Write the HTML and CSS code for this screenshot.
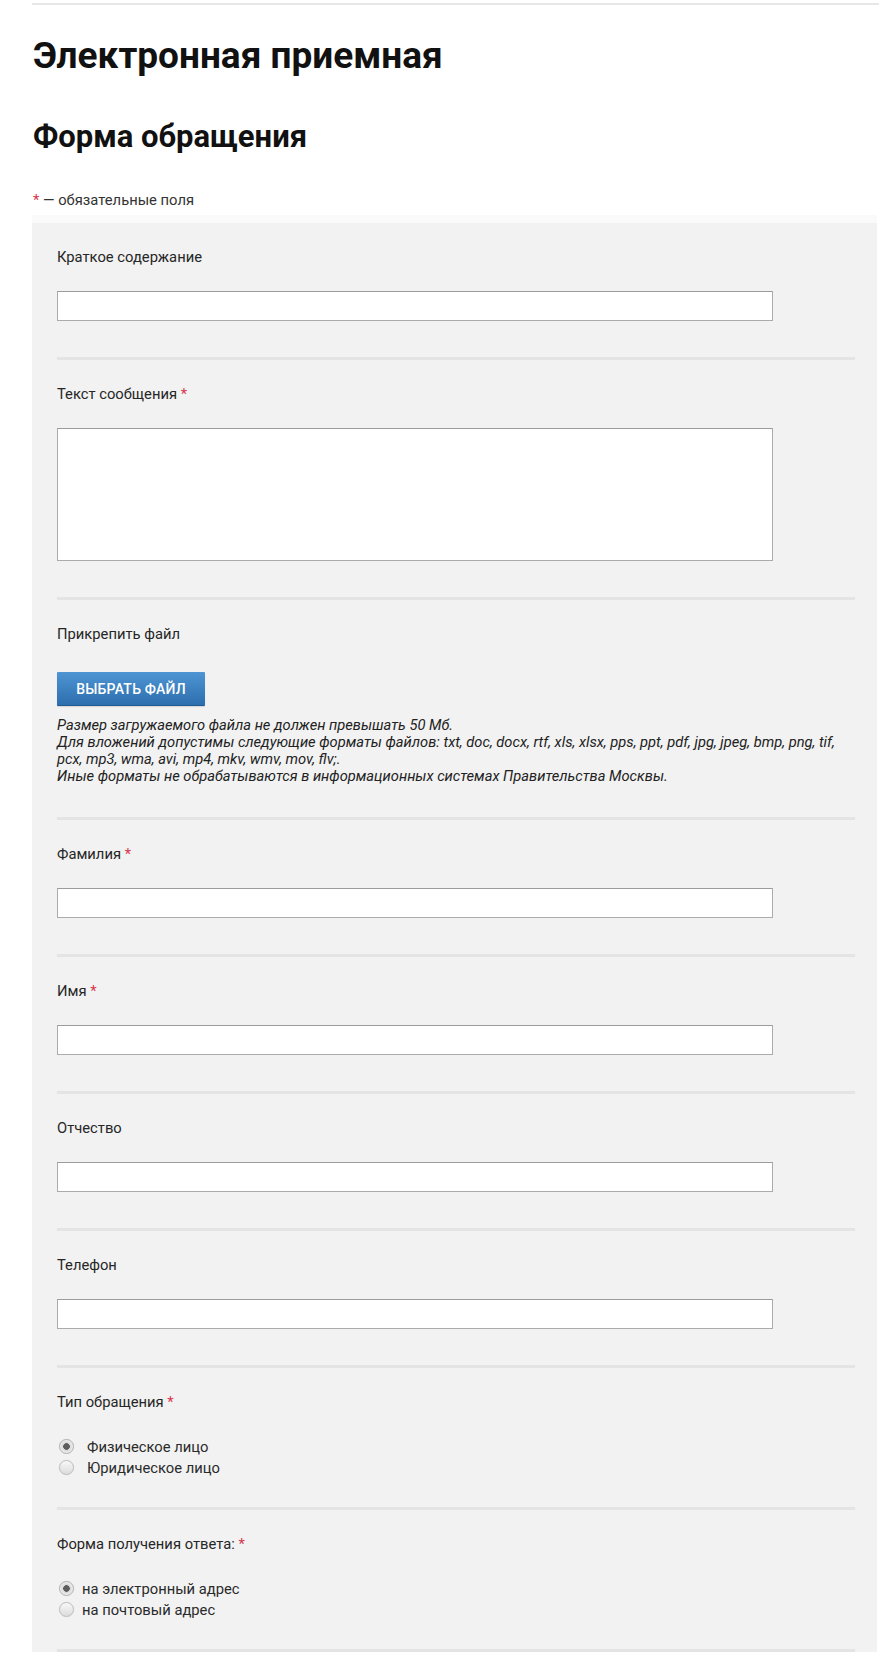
FILE: index.html
```html
<!DOCTYPE html>
<html lang="ru">
<head>
<meta charset="utf-8">
<title>Электронная приемная</title>
<link rel="stylesheet" href="styles.css">
</head>
<body>
<div class="page">
  <div class="topline"></div>
  <h1 class="title">Электронная приемная</h1>
  <h2 class="subtitle">Форма обращения</h2>
  <p class="req-note"><span class="star">*</span> — обязательные поля</p>

  <form class="panel">
    <div class="section">
      <label class="field-label">Краткое содержание</label>
      <input class="text-input" type="text">
    </div>

    <div class="section">
      <label class="field-label">Текст сообщения <span class="star">*</span></label>
      <textarea class="text-area"></textarea>
    </div>

    <div class="section section-file">
      <label class="field-label">Прикрепить файл</label>
      <button type="button" class="file-btn">Выбрать файл</button>
      <p class="file-note">Размер загружаемого файла не должен превышать 50 Мб.<br>Для вложений допустимы следующие форматы файлов: txt, doc, docx, rtf, xls, xlsx, pps, ppt, pdf, jpg, jpeg, bmp, png, tif, pcx, mp3, wma, avi, mp4, mkv, wmv, mov, flv;.<br>Иные форматы не обрабатываются в информационных системах Правительства Москвы.</p>
    </div>

    <div class="section">
      <label class="field-label">Фамилия <span class="star">*</span></label>
      <input class="text-input" type="text">
    </div>

    <div class="section">
      <label class="field-label">Имя <span class="star">*</span></label>
      <input class="text-input" type="text">
    </div>

    <div class="section">
      <label class="field-label">Отчество</label>
      <input class="text-input" type="text">
    </div>

    <div class="section">
      <label class="field-label">Телефон</label>
      <input class="text-input" type="text">
    </div>

    <div class="section section-radio">
      <div class="field-label">Тип обращения <span class="star">*</span></div>
      <div class="radio-group">
        <label class="radio-row wide"><input type="radio" name="t" class="radio" checked><span>Физическое лицо</span></label>
        <label class="radio-row wide"><input type="radio" name="t" class="radio"><span>Юридическое лицо</span></label>
      </div>
    </div>

    <div class="section section-radio">
      <div class="field-label">Форма получения ответа: <span class="star">*</span></div>
      <div class="radio-group">
        <label class="radio-row"><input type="radio" name="a" class="radio" checked><span>на электронный адрес</span></label>
        <label class="radio-row"><input type="radio" name="a" class="radio"><span>на почтовый адрес</span></label>
      </div>
    </div>
  </form>
</div>
</body>
</html>
```

FILE: styles.css
```css
* { box-sizing: border-box; }

html, body {
  margin: 0;
  padding: 0;
  background: #ffffff;
}

body {
  font-family: Roboto, "Noto Sans", "Liberation Sans", sans-serif;
  color: #222222;
  font-size: 14.75px;
  line-height: 20px;
}

.page {
  margin-left: 32px;
  width: 847px;
  padding-top: 3px;
}

.topline {
  height: 2px;
  background: #e7e7e7;
}

.title {
  margin: 29px 0 0 1px;
  font-size: 37px;
  line-height: 44px;
  font-weight: 700;
  color: #111111;
}

.subtitle {
  margin: 41px 0 0 1px;
  font-size: 31px;
  line-height: 36px;
  font-weight: 700;
  color: #111111;
}

.req-note {
  margin: 35px 0 0 1px;
  font-size: 14.75px;
  line-height: 20px;
  color: #333333;
}

.star {
  color: #d8374c;
}

.panel {
  margin-top: 13px;
  width: 845px;
  background: #f2f2f2;
  padding: 0 22px 0 25px;
  box-shadow: 0 -8px 0 #fafafa;
}

.section {
  padding: 24px 0 36px;
  border-bottom: 3px solid #e4e4e4;
}

.field-label {
  display: block;
  font-size: 14.75px;
  line-height: 20px;
  color: #262626;
  margin-bottom: 24px;
}

.text-input {
  display: block;
  width: 716px;
  height: 30px;
  margin: 0;
  background: #ffffff;
  border: 1px solid #ababab;
  border-top-color: #9c9c9c;
  border-radius: 0;
  padding: 0 6px;
  font: inherit;
}

.text-area {
  display: block;
  width: 716px;
  height: 133px;
  margin: 0;
  background: #ffffff;
  border: 1px solid #ababab;
  border-top-color: #9c9c9c;
  border-radius: 0;
  resize: none;
  font: inherit;
}

.section-file {
  padding-bottom: 32px;
}

.file-btn {
  display: block;
  width: 148px;
  height: 34px;
  margin-top: 28px;
  border: 0;
  border-bottom: 1px solid #225a92;
  border-radius: 1px;
  background: linear-gradient(#4e95d4, #2d6eae);
  color: #ffffff;
  font-family: Roboto, "Liberation Sans", sans-serif;
  font-size: 14px;
  font-weight: 500;
  text-transform: uppercase;
  letter-spacing: 0.2px;
  padding: 0;
  box-shadow: 0 1px 1px rgba(0,0,0,0.12);
}

.file-note {
  margin: 11px 0 0;
  font-size: 14.7px;
  line-height: 17px;
  font-style: italic;
  color: #222222;
}

.section-radio {
  padding-bottom: 29px;
}

.radio-group {
  display: flex;
  flex-direction: column;
}

.radio-row {
  display: flex;
  align-items: center;
  height: 21px;
  gap: 8px;
  font-size: 14.75px;
  color: #2a2a2a;
}

.radio-row.wide {
  gap: 13px;
}

.radio {
  -webkit-appearance: none;
  appearance: none;
  width: 15px;
  height: 15px;
  margin: 0 0 0 2px;
  border-radius: 50%;
  border: 1px solid #bdbdbd;
  background: linear-gradient(#f8f8f8, #dcdcdc);
  box-shadow: 0 0 1px rgba(0,0,0,0.1);
}

.radio:checked {
  background: radial-gradient(circle, #5e5e5e 0, #5e5e5e 3px, #d8d8d8 3.6px, #f3f3f3 7px);
  border-color: #b0b0b0;
}
```
